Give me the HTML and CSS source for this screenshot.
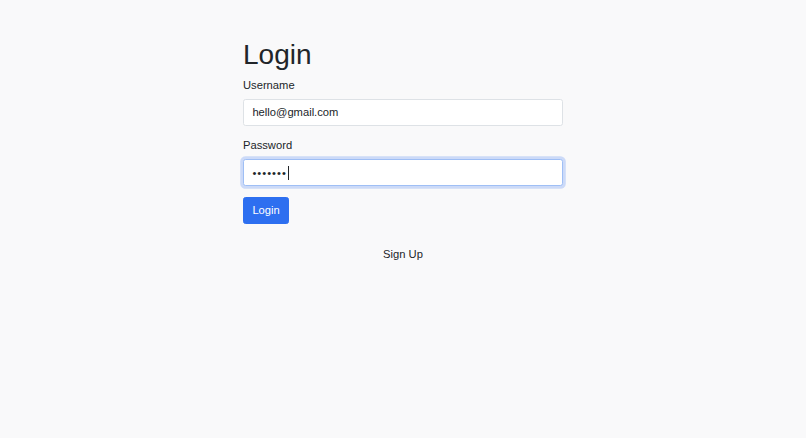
FILE: index.html
```html
<!DOCTYPE html>
<html lang="en">
<head>
<meta charset="utf-8">
<title>Login</title>
<link rel="stylesheet" href="styles.css">
</head>
<body>
<main class="container">
  <h1 class="title">Login</h1>
  <form class="form">
    <div class="field">
      <label class="label" for="username">Username</label>
      <input class="input" id="username" type="text" value="hello@gmail.com">
    </div>
    <div class="field">
      <label class="label" for="password">Password</label>
      <div class="input-wrap">
        <input class="input is-focused" id="password" type="password" value="1234567">
        <span class="caret"></span>
      </div>
    </div>
    <button class="btn" type="button">Login</button>
  </form>
  <div class="signup">Sign Up</div>
</main>
</body>
</html>
```

FILE: styles.css
```css
* { box-sizing: border-box; }
html, body { margin: 0; padding: 0; }
body {
  background: #f9f9fa;
  color: #212529;
  font-family: "Liberation Sans", Arial, sans-serif;
  font-size: 11.2px;
  line-height: 1.5;
}
.container {
  width: 320px;
  margin: 0 auto;
  padding-top: 37.5px;
}
.title {
  margin: 0 0 5.6px;
  font-size: 28px;
  font-weight: 500;
  line-height: 1.2;
}
.field { margin-bottom: 11.2px; }
.label {
  display: block;
  margin-bottom: 5.6px;
}
.input-wrap { position: relative; }
.input {
  display: block;
  width: 100%;
  height: 26.6px;
  padding: 4.2px 8.4px;
  font: inherit;
  color: #212529;
  background: #fff;
  border: 1px solid #dee2e6;
  border-radius: 2.6px;
  outline: none;
}
.input.is-focused {
  border-color: #9fbff5;
  box-shadow: 0 0 0 2.8px rgba(45, 111, 240, 0.22);
  letter-spacing: 1px;
}
.caret {
  position: absolute;
  left: 45px;
  top: 6.5px;
  width: 1px;
  height: 14px;
  background: #212529;
}
.btn {
  display: block;
  height: 26.6px;
  padding: 4.2px 8.4px;
  font: inherit;
  color: #fff;
  background: #2d6ff0;
  border: 1px solid #2d6ff0;
  border-radius: 2.6px;
}
.signup {
  margin-top: 22.2px;
  text-align: center;
}
```
